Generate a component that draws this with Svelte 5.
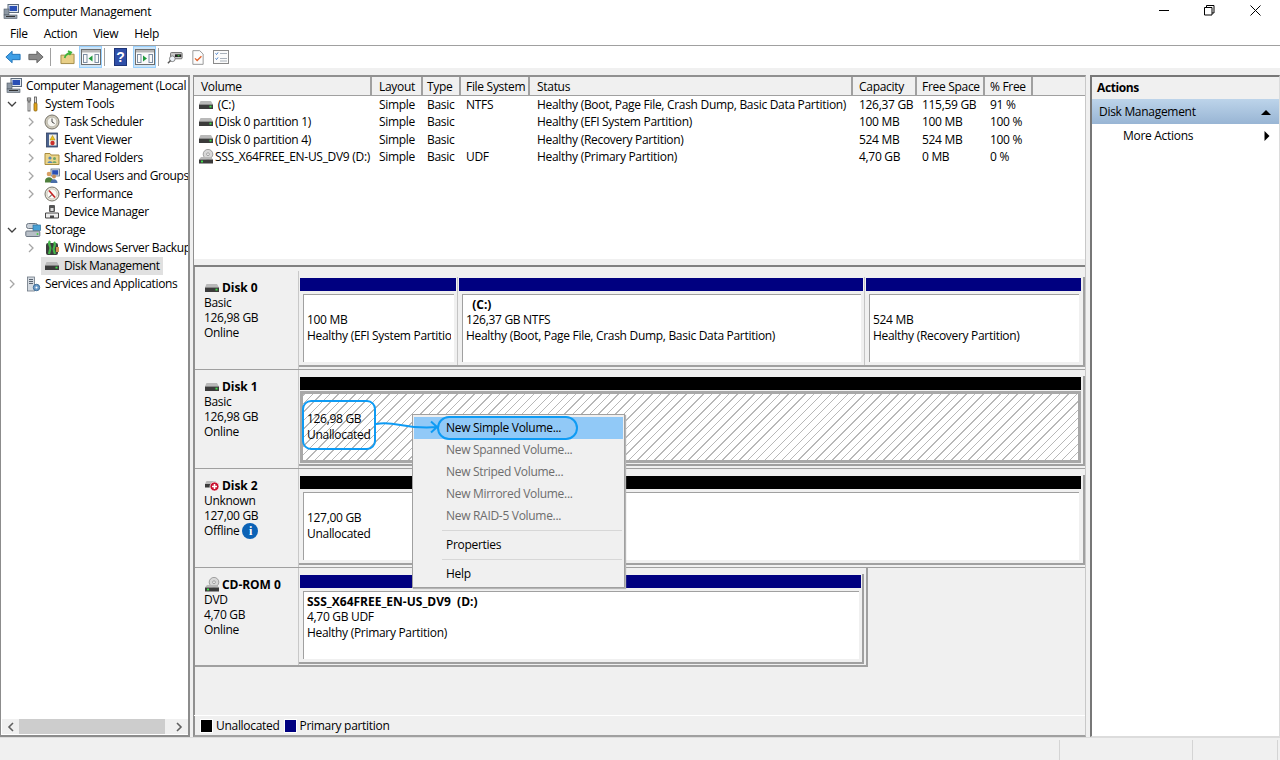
<script lang="ts">
	// Computer Management > Disk Management, with the New Simple Volume menu open.
	const NAVY = '#000080';
	const BLACK = '#000';

	const tree = [
		{ level: 0, label: 'Computer Management (Local', icon: 'computer', chev: '' },
		{ level: 1, label: 'System Tools', icon: 'tools', chev: 'open' },
		{ level: 2, label: 'Task Scheduler', icon: 'clock', chev: 'closed' },
		{ level: 2, label: 'Event Viewer', icon: 'event', chev: 'closed' },
		{ level: 2, label: 'Shared Folders', icon: 'shared', chev: 'closed' },
		{ level: 2, label: 'Local Users and Groups', icon: 'users', chev: 'closed' },
		{ level: 2, label: 'Performance', icon: 'perf', chev: 'closed' },
		{ level: 2, label: 'Device Manager', icon: 'device', chev: 'none' },
		{ level: 1, label: 'Storage', icon: 'storage', chev: 'open' },
		{ level: 2, label: 'Windows Server Backup', icon: 'backup', chev: 'closed' },
		{ level: 2, label: 'Disk Management', icon: 'disk', chev: 'none', selected: true },
		{ level: 1, label: 'Services and Applications', icon: 'services', chev: 'closed' }
	];

	// pad = text inset, the columns don't share one in the original list view
	const columns = [
		{ label: 'Volume', w: 178, pad: 7 },
		{ label: 'Layout', w: 51, pad: 7 },
		{ label: 'Type', w: 38, pad: 4 },
		{ label: 'File System', w: 69, pad: 5 },
		{ label: 'Status', w: 323, pad: 7 },
		{ label: 'Capacity', w: 64, pad: 6 },
		{ label: 'Free Space', w: 68, pad: 5 },
		{ label: '% Free', w: 48, pad: 5 }
	];

	const volumes = [
		{ icon: 'disk', cells: ['\u00a0(C:)', 'Simple', 'Basic', 'NTFS', 'Healthy (Boot, Page File, Crash Dump, Basic Data Partition)', '126,37 GB', '115,59 GB', '91 %'] },
		{ icon: 'disk', cells: ['(Disk 0 partition 1)', 'Simple', 'Basic', '', 'Healthy (EFI System Partition)', '100 MB', '100 MB', '100 %'] },
		{ icon: 'disk', cells: ['(Disk 0 partition 4)', 'Simple', 'Basic', '', 'Healthy (Recovery Partition)', '524 MB', '524 MB', '100 %'] },
		{ icon: 'cd', cells: ['SSS_X64FREE_EN-US_DV9 (D:)', 'Simple', 'Basic', 'UDF', 'Healthy (Primary Partition)', '4,70 GB', '0 MB', '0 %'] }
	];

	const disks = [
		{
			name: 'Disk 0', icon: 'disk', info: ['Basic', '126,98 GB', 'Online'],
			parts: [
				{ w: 159, color: NAVY, title: '', lines: ['100 MB', 'Healthy (EFI System Partition)'] },
				{ w: 407, color: NAVY, title: '\u00a0\u00a0(C:)', lines: ['126,37 GB NTFS', 'Healthy (Boot, Page File, Crash Dump, Basic Data Partition)'] },
				{ w: 218, color: NAVY, title: '', lines: ['524 MB', 'Healthy (Recovery Partition)'] }
			]
		},
		{
			name: 'Disk 1', icon: 'disk', info: ['Basic', '126,98 GB', 'Online'],
			parts: [{ w: 784, color: BLACK, title: '', lines: ['126,98 GB', 'Unallocated'], hatch: true }]
		},
		{
			name: 'Disk 2', icon: 'diskerr', info: ['Unknown', '127,00 GB', 'Offline'], offline: true,
			parts: [{ w: 784, color: BLACK, title: '', lines: ['127,00 GB', 'Unallocated'] }]
		},
		{
			name: 'CD-ROM 0', icon: 'cd', info: ['DVD', '4,70 GB', 'Online'], short: true,
			parts: [{ w: 563, color: NAVY, title: 'SSS_X64FREE_EN-US_DV9\u00a0\u00a0(D:)', lines: ['4,70 GB UDF', 'Healthy (Primary Partition)'] }]
		}
	];

	const menu = [
		{ label: 'New Simple Volume...', active: true },
		{ label: 'New Spanned Volume...', off: true },
		{ label: 'New Striped Volume...', off: true },
		{ label: 'New Mirrored Volume...', off: true },
		{ label: 'New RAID-5 Volume...', off: true },
		{ sep: true },
		{ label: 'Properties' },
		{ sep: true },
		{ label: 'Help' }
	];
</script>

{#snippet icon(name: string)}
	<svg class="ico" viewBox="0 0 16 16" width="16" height="16">
		{#if name === 'computer'}
			<rect x="5" y="0.5" width="10.5" height="8" fill="#dfe6ee" stroke="#5d6b7c" />
			<rect x="6.5" y="2" width="7.5" height="5" fill="#2a4fb5" />
			<rect x="1" y="5" width="5" height="6" fill="#8c97a3" stroke="#4d5763" stroke-width="0.6" />
			<rect x="1" y="11" width="13" height="3.5" fill="#9aa4af" stroke="#4d5763" stroke-width="0.6" />
			<path d="M3 12.5h9" stroke="#333" />
		{:else if name === 'tools'}
			<path d="M4 1v5M2.5 1.5v3.5h3V1.5" fill="none" stroke="#777" stroke-width="1.2" />
			<rect x="3" y="6" width="2" height="9" fill="#eee" stroke="#555" stroke-width="0.8" />
			<rect x="9.5" y="1" width="2" height="6" fill="#ddd" stroke="#555" stroke-width="0.8" />
			<rect x="9" y="7" width="3" height="8" rx="1" fill="#e3a51d" stroke="#8a6510" stroke-width="0.8" />
		{:else if name === 'clock'}
			<circle cx="8" cy="8" r="7" fill="#cfcabb" stroke="#77746a" />
			<circle cx="8" cy="8" r="4.8" fill="#f7f6f1" stroke="#a5a295" stroke-width="0.6" />
			<path d="M8 4.5V8l2.5 1.5" fill="none" stroke="#444" />
		{:else if name === 'event'}
			<rect x="2.5" y="1" width="11" height="14" fill="#4b6390" stroke="#2f3f5f" stroke-width="0.8" />
			<rect x="5" y="2.5" width="7.5" height="11" fill="#f3f1e6" />
			<path d="M8.5 3.5l2.5 4.5H6z" fill="#f0c419" stroke="#96790c" stroke-width="0.5" />
			<circle cx="8.5" cy="11" r="2.2" fill="#c9302c" />
		{:else if name === 'shared'}
			<path d="M1 3.5h5l1 1.5h8v9.5H1z" fill="#ecd58b" stroke="#a98c3d" />
			<circle cx="6" cy="8" r="1.6" fill="#5a89b5" />
			<path d="M3.5 13c0-2.5 5-2.5 5 0z" fill="#5a89b5" />
			<circle cx="10.5" cy="8.5" r="1.5" fill="#74a466" />
			<path d="M8.5 13c0-2.2 4-2.2 4 0z" fill="#74a466" />
		{:else if name === 'users'}
			<rect x="7" y="1" width="8.5" height="7" fill="#dfe6ee" stroke="#5d6b7c" stroke-width="0.8" />
			<rect x="8.2" y="2.2" width="6" height="4.5" fill="#2a4fb5" />
			<circle cx="5" cy="6" r="2.3" fill="#d9a066" />
			<path d="M1 13c0-5 8-5 8 0v1.5H1z" fill="#4e7f3c" />
			<circle cx="10" cy="8.5" r="2" fill="#c98d5a" />
			<path d="M6.5 15c0-5 7-5 7 0z" fill="#4a6ea8" />
		{:else if name === 'perf'}
			<circle cx="8" cy="8" r="7" fill="#e9e6da" stroke="#77746a" />
			<circle cx="8" cy="8" r="5" fill="#fbfaf5" stroke="#aaa69a" stroke-width="0.5" />
			<path d="M5 4.5l6 7" stroke="#cc2222" stroke-width="1.6" />
			<path d="M5 11.5l3-3" stroke="#333" />
		{:else if name === 'device'}
			<rect x="5" y="1" width="6" height="7" rx="1" fill="#555" />
			<rect x="6.5" y="4" width="3" height="3" fill="#ddd" />
			<path d="M1.5 14v-5h13v5z" fill="#eee" stroke="#444" />
			<path d="M6 14v-2.5h4V14z" fill="#444" />
		{:else if name === 'storage'}
			<rect x="1.5" y="1.5" width="11" height="5" rx="2" fill="#c9d0d8" stroke="#6c7682" />
			<rect x="8" y="3" width="7.5" height="5.5" fill="#47a0d5" stroke="#2c6f9a" stroke-width="0.7" />
			<rect x="0.8" y="9" width="14" height="5.5" rx="1" fill="#b8bfc7" stroke="#6c7682" />
			<circle cx="12.5" cy="12" r="1" fill="#4ad04a" />
		{:else if name === 'backup'}
			<rect x="2" y="3" width="12" height="12" rx="2" fill="#3d3d3d" />
			<path d="M6 1c-3 4 2 5 0 9l-1 4M10 2c3 4-2 5 0 9l1 3" fill="none" stroke="#43b649" stroke-width="2.2" />
			<rect x="12" y="7" width="3" height="5" fill="#cf8f55" />
		{:else if name === 'disk'}
			<path d="M2.5 4h10.5l2 3.5H1z" fill="#b9b9b9" />
			<rect x="1" y="7.5" width="14" height="4.5" fill="#3b3b3b" />
			<rect x="11.5" y="8.7" width="2" height="1.8" fill="#3fe04a" />
		{:else if name === 'diskerr'}
			<path d="M2.5 3h9l1.5 3H1z" fill="#b9b9b9" />
			<rect x="1" y="6" width="6" height="3.5" fill="#3b3b3b" />
			<circle cx="10.5" cy="8.5" r="4.5" fill="#c8102e" stroke="#fff" stroke-width="0.7" />
			<path d="M8 8.5h5M10.5 6v5" stroke="#fff" stroke-width="1.6" />
		{:else if name === 'cd'}
			<circle cx="10" cy="5.2" r="4.8" fill="#d8d8d8" stroke="#8d8d8d" stroke-width="0.8" />
			<circle cx="10" cy="5.2" r="1.4" fill="#f4f4f4" stroke="#777" stroke-width="0.6" />
			<path d="M3 8h10l2 2.5H1z" fill="#b9b9b9" />
			<rect x="1" y="10.5" width="14" height="4" fill="#3b3b3b" />
			<rect x="3" y="11.6" width="2" height="1.8" fill="#3fe04a" />
		{:else if name === 'services'}
			<rect x="2.5" y="1" width="7" height="14" fill="#d4dae1" stroke="#6c7682" stroke-width="0.8" />
			<path d="M4 3.5h4M4 5.5h4M4 7.5h4" stroke="#5a6470" />
			<circle cx="11.5" cy="11.5" r="3.2" fill="#6a9bc9" stroke="#3c6a94" />
			<circle cx="11.5" cy="11.5" r="1" fill="#fff" />
		{/if}
	</svg>
{/snippet}

{#snippet paneToggle(color: string, left: boolean)}
	<svg viewBox="0 0 20 18" width="20" height="18">
		<rect x="0.5" y="1.5" width="19" height="15" fill="#fafafa" stroke="#6d6d6d" />
		<rect x="1" y="2" width="18" height="2.5" fill="#b7b7b7" />
		<rect x="2.5" y="6.5" width="3.5" height="8" fill="none" stroke="#7d8ea3" />
		<rect x="14" y="6.5" width="3.5" height="8" fill="none" stroke="#7d8ea3" />
		{#if left}
			<path d="M11.500 7.500v6L7.500 10.500z" fill={color} />
		{:else}
			<path d="M8 7.500v6l4-3z" fill={color} />
		{/if}
	</svg>
{/snippet}

<div class="app">
	<header class="title">
		<span class="tico">{@render icon('computer')}</span>
		<span class="tname">Computer Management</span>
		<div class="winbtns">
			<svg viewBox="0 0 46 22" width="46" height="22"><path d="M18 10.500h10" stroke="#000" /></svg>
			<svg viewBox="0 0 46 22" width="46" height="22"><path d="M17.500 7.500h7.500v7.500h-7.500zM19.500 7.500v-2h7.500v7.500h-2" fill="none" stroke="#000" /></svg>
			<svg viewBox="0 0 46 22" width="46" height="22"><path d="M17.500 5.500l10 10M27.500 5.500l-10 10" stroke="#000" /></svg>
		</div>
	</header>

	<nav class="menubar">
		<span>File</span><span>Action</span><span>View</span><span>Help</span>
	</nav>

	<div class="toolbar">
		<svg class="tool back" viewBox="0 0 18 16" width="16" height="16"><path d="M1 8l7-6.500V5h9v6H8v3.500z" fill="#3f9fe6" stroke="#1b6fb5" /></svg>
		<svg class="tool fwd" viewBox="0 0 18 16" width="16" height="16"><path d="M17 8l-7-6.500V5H1v6h9v3.500z" fill="#8a8a8a" stroke="#5c5c5c" /></svg>
		<i class="tsep"></i>
		<svg class="tool up" viewBox="0 0 16 16" width="15" height="16"><path d="M1 6h5l1-1h8v10H1z" fill="#e8cf87" stroke="#a08a45" /><path d="M5 9c1-4 4-5 6-6M8.500 1.500L12 3l-2 3" fill="none" stroke="#3fb43c" stroke-width="1.8" /></svg>
		<div class="hot">{@render paneToggle('#1f9a3c', true)}</div>
		<i class="tsep"></i>
		<div class="help">?</div>
		<div class="hot">{@render paneToggle('#1f9a3c', false)}</div>
		<i class="tsep last"></i>
		<svg class="tool" viewBox="0 0 18 18" width="16" height="18"><rect x="4" y="4" width="13" height="7" rx="1" fill="#c8c8c8" stroke="#666" /><rect x="9" y="6" width="7" height="3" fill="#222" /><rect x="12" y="7" width="2" height="1.200" fill="#3fe04a" /><circle cx="6" cy="11" r="3.200" fill="#eef4fa" stroke="#777" /><path d="M4 13l-3 3" stroke="#555" stroke-width="1.600" /></svg>
		<svg class="tool" viewBox="0 0 14 18" width="12" height="17"><path d="M1 1h8l4 4v12H1z" fill="#fcfcfc" stroke="#8a8a8a" /><path d="M3.500 10l2.500 2.500 5-5" fill="none" stroke="#e2622b" stroke-width="1.500" /></svg>
		<svg class="tool" viewBox="0 0 16 14" width="16" height="14"><rect x="0.500" y="0.500" width="15" height="13" fill="#fbfbfb" stroke="#8a8a8a" /><path d="M2.500 3.500l1 1 1.500-2M2.500 8.500l1 1 1.500-2" fill="none" stroke="#3c78c8" /><path d="M7 3.500h7M7 8.500h7M7 11h7" stroke="#aab2bb" /></svg>
	</div>

	<main class="panes">
		<aside class="treepane">
			<div class="tree">
				{#each tree as n}
					<div class="node" style="padding-left:{n.level === 2 ? 19 : 0}px">
						<span class="chev" class:root={n.level === 0}>
							{#if n.chev === 'open'}
								<svg viewBox="0 0 10 10" width="10" height="10"><path d="M1 3l4 4 4-4" fill="none" stroke="#404040" stroke-width="1.300" /></svg>
							{:else if n.chev === 'closed'}
								<svg viewBox="0 0 10 10" width="10" height="10"><path d="M3 1l4 4-4 4" fill="none" stroke="#a6a6a6" stroke-width="1.300" /></svg>
							{/if}
						</span>
						<span class="lbl" class:sel={n.selected}>{@render icon(n.icon)}<span class="ltext">{n.label}</span></span>
					</div>
				{/each}
			</div>
			<div class="hscroll">
				<svg viewBox="0 0 8 10" width="8" height="10"><path d="M6 1L2 5l4 4" fill="none" stroke="#606060" stroke-width="1.600" /></svg>
				<i class="thumb"></i>
				<svg class="rarrow" viewBox="0 0 8 10" width="8" height="10"><path d="M2 1l4 4-4 4" fill="none" stroke="#606060" stroke-width="1.600" /></svg>
			</div>
		</aside>

		<section class="center">
			<div class="list">
				<div class="lhead">
					{#each columns as c}
						<div class="hcell" style="width:{c.w}px;padding-left:{c.pad}px">{c.label}</div>
					{/each}
				</div>
				{#each volumes as v}
					<div class="lrow">
						{#each v.cells as cell, i}
							<div class="lcell" class:first={i === 0} style="width:{columns[i].w}px;padding-left:{i === 0 ? 4 : columns[i].pad}px">
								{#if i === 0}{@render icon(v.icon)}{/if}<span>{cell}</span>
							</div>
						{/each}
					</div>
				{/each}
			</div>

			<div class="disks">
				{#each disks as d}
					<div class="drow" class:short={d.short}>
						<div class="dlabel">
							<div class="dname">{@render icon(d.icon)}<b>{d.name}</b></div>
							{#each d.info as line, i}
								<div class="dline">
									{line}
									{#if d.offline && i === 2}
										<span class="info">i</span>
									{/if}
								</div>
							{/each}
						</div>
						<div class="dframe">
							{#each d.parts as p}
								<div class="part" style="width:{p.w}px">
									<div class="pbar" style="background:{p.color}"></div>
									<div class="pbox" class:hatch={p.hatch}>
										<div class="ptitle">{p.title || '\u00a0'}</div>
										{#each p.lines as l}<div class="pline">{l}</div>{/each}
									</div>
								</div>
							{/each}
						</div>
					</div>
				{/each}
			</div>

			<div class="legend">
				<i class="swatch" style="background:{BLACK}"></i><span>Unallocated</span>
				<i class="swatch" style="background:{NAVY}"></i><span>Primary partition</span>
			</div>
		</section>

		<aside class="actions">
			<div class="ahead">Actions</div>
			<div class="aband">
				<span>Disk Management</span>
				<svg viewBox="0 0 10 6" width="10" height="6"><path d="M0 6l5-5 5 5z" fill="#000" /></svg>
			</div>
			<div class="aitem">
				<span>More Actions</span>
				<svg viewBox="0 0 6 10" width="6" height="10"><path d="M0.500 0l5 5-5 5z" fill="#000" /></svg>
			</div>
		</aside>
	</main>

	<footer class="status">
		<i></i><i></i><i></i>
	</footer>

	<div class="ctx">
		{#each menu as m}
			{#if m.sep}
				<div class="msep"></div>
			{:else}
				<div class="mitem" class:active={m.active} class:off={m.off}>{m.label}</div>
			{/if}
		{/each}
	</div>

	<!-- annotation drawn over the screenshot -->
	<div class="callout"></div>
	<div class="pill"></div>
	<svg class="arrow" viewBox="0 0 66 16" width="66" height="16">
		<path d="M1 6C20 2 30 12 62 9M56 3.500l6 5.500-6 5.500" fill="none" stroke="#0e9bf4" stroke-width="2" />
	</svg>
</div>

<style>
	:global(body) { margin: 0; background: #f0f0f0; }
	.app {
		position: relative;
		width: 1280px;
		height: 760px;
		overflow: hidden;
		display: flex;
		flex-direction: column;
		background: #f0f0f0;
		color: #000;
		font: 12px/15.3px "Open Sans", "Noto Sans", sans-serif;
		letter-spacing: -0.3px;
	}
	.ico { flex: 0 0 auto; display: block; }

	.title { height: 23px; flex: 0 0 auto; display: flex; align-items: center; background: #fff; padding-left: 3px; }
	.tico { width: 20px; }
	.tname { flex: 1; }
	.winbtns { display: flex; margin-right: 1px; align-self: flex-start; }
	.menubar { height: 22px; flex: 0 0 auto; display: flex; align-items: center; gap: 16px; padding-left: 10px; background: #fff; border-bottom: 1px solid #a0a0a0; }
	.toolbar { height: 22px; flex: 0 0 auto; display: flex; align-items: center; padding-left: 5px; background: #fff; }
	.tool { flex: 0 0 auto; margin-right: 9px; }
	.tool.back { margin-right: 7px; }
	.tool.fwd { margin-right: 6px; }
	.tool.up { margin-right: 4px; }
	.tsep { width: 1px; height: 18px; background: #a0a0a0; margin-right: 9px; }
	.tsep.last { margin-right: 8px; }
	.hot { width: 23px; height: 22px; display: grid; place-items: center; box-sizing: border-box; background: #cce4f7; border: 1px solid #99d1ff; margin-right: 2px; }
	.help { width: 13px; height: 18px; margin-right: 6px; display: grid; place-items: center; background: #2f4fa8; color: #fff; font: bold 14px "Liberation Sans", sans-serif; letter-spacing: 0; box-shadow: inset 0 0 0 1px #1d3478; }

	.panes { height: 662px; flex: 0 0 auto; margin-top: 7px; display: flex; }

	.treepane { width: 190px; box-sizing: border-box; display: flex; flex-direction: column; background: #fff; border: 1px solid #8c8c8c; border-width: 2px 2px 2px 1px; }
	.tree { flex: 1; overflow: hidden; }
	.node { height: 18px; display: flex; align-items: center; white-space: nowrap; }
	.chev { width: 24px; flex: 0 0 auto; }
	.chev.root { width: 5px; }
	.chev svg { display: block; margin-left: 6px; }
	.lbl { display: flex; align-items: center; height: 18px; margin-left: -3px; padding: 0 2px 0 3px; }
	.lbl.sel { background: #e0e0e0; }
	.ltext { margin-left: 4px; margin-right: 1px; letter-spacing: -0.36px; }
	.hscroll { height: 15px; margin: 0 0 1px 1px; display: flex; align-items: center; padding: 0 5px; background: #f0f0f0; }
	.thumb { width: 146px; height: 15px; margin-left: 4px; background: #cdcdcd; }
	.rarrow { margin-left: auto; }

	.center { width: 893px; margin-left: 3px; box-sizing: border-box; display: flex; flex-direction: column; border: 2px solid #909090; border-right: 1px solid #c8c8c8; border-bottom-color: #a0a0a0; }
	.list { height: 190px; flex: 0 0 auto; box-sizing: border-box; margin-left: -1px; background: #fff; border-bottom: 2px solid #808080; box-shadow: inset 0 -6px #f0f0f0; }
	.lhead { height: 19px; display: flex; background: #f0f0f0; }
	.hcell { height: 19px; box-sizing: border-box; padding-top: 2px; border-right: 2px solid #a0a0a0; border-bottom: 1px solid #a0a0a0; white-space: nowrap; overflow: hidden; }
	.lhead::after { content: ''; flex: 1; border-bottom: 1px solid #a0a0a0; }
	.lrow { height: 17.33px; display: flex; align-items: center; }
	.lcell { flex: 0 0 auto; box-sizing: border-box; white-space: nowrap; overflow: hidden; }
	.lcell.first { display: flex; align-items: center; gap: 1px; }

	.disks { flex: 1; padding-top: 4px; }
	.drow { height: 99px; box-sizing: border-box; display: flex; border-bottom: 1px solid #a0a0a0; }
	.drow.short { width: 673px; border-right: 2px solid #a0a0a0; border-bottom-width: 2px; }
	.dlabel { width: 104px; flex: 0 0 auto; box-sizing: border-box; border-right: 1px solid #c8c8c8; padding: 8px 0 0 9px; }
	.dname { display: flex; align-items: center; height: 18px; margin-bottom: -2px; gap: 2px; letter-spacing: -0.05px; }
	.dname b { font-weight: 700; }
	.dline { height: 15px; display: flex; align-items: center; gap: 3px; white-space: nowrap; }
	.info { width: 16px; height: 16px; margin-top: 1px; border-radius: 50%; display: grid; place-items: center; background: #0b62b6; color: #fff; font: bold 12px "Liberation Serif", serif; }
	.dframe { height: 90px; margin-top: 6px; box-sizing: border-box; display: flex; border: 0 solid #a0a0a0; border-width: 0 2px 2px 0; width: max-content; }
	.part { box-sizing: border-box; height: 88px; flex: 0 0 auto; padding: 1px 1px 0 1px; border-right: 1px solid #c4c4c4; }
	.part:last-child { border-right: 0; padding-right: 2px; }
	.short .part:last-child { padding-right: 1px; }
	.pbar { height: 13px; }
	.pbox { height: 68px; margin: 3px 2px 0 3px; box-sizing: border-box; padding: 1.5px 3px 0 3px; background: #fff; border: 0 solid #a0a0a0; border-width: 1px 0 0 1px; white-space: nowrap; }
	.pbox.hatch {
		height: 72px;
		margin: 1px 0 0;
		padding: 1.5px 0 0 4px;
		border: 3px solid #a8a8a8;
		background: repeating-linear-gradient(-45deg, #fff 0 5px, #b8b8b8 5px 6px);
	}
	.ptitle { font-weight: 700; height: 15.5px; letter-spacing: 0; }
	.pline { height: 15.5px; overflow: hidden; }

	.legend { height: 20px; flex: 0 0 auto; box-sizing: border-box; margin-left: -1px; display: flex; align-items: center; padding-left: 7px; border-top: 1px solid #fff; white-space: nowrap; }
	.swatch { width: 11px; height: 12px; margin: 0 3px 0 -1px; border: 1px solid #fff; box-sizing: content-box; }
	.legend span { margin-right: 5px; }

	.actions { width: 190px; margin-left: 4px; box-sizing: border-box; background: #fff; border-left: 2px solid #777; border-top: 2px solid #777; border-bottom: 1px solid #dcdcdc; border-right: 1px solid #dcdcdc; }
	.ahead { height: 22px; display: flex; align-items: center; padding-left: 5px; background: #f0f0f0; font-weight: 700; letter-spacing: -0.4px; }
	.aband { height: 25px; display: flex; align-items: center; justify-content: space-between; padding: 0 8px 0 7px; background: linear-gradient(#bdd4ea, #98b5d4); }
	.aitem { height: 24px; display: flex; align-items: center; justify-content: space-between; padding: 0 9px 0 31px; }

	.status { flex: 1; position: relative; border-top: 1px solid #dcdcdc; }
	.status i { position: absolute; top: 2px; bottom: 0; width: 1px; background: #d4d4d4; }
	.status i:nth-child(1) { left: 1059px; }
	.status i:nth-child(2) { left: 1192px; }
	.status i:nth-child(3) { left: 1277px; }

	.ctx { position: absolute; left: 412px; top: 414px; width: 213px; height: 174px; box-sizing: border-box; padding: 2px 1px; background: #f0f0f0; border: 1px solid #a0a0a0; box-shadow: 1px 1px 1px #b5b5b5; }
	.mitem { height: 22px; line-height: 22px; padding-left: 32px; }
	.mitem.active { background: #91c9f7; }
	.mitem.off { color: #6d6d6d; }
	.msep { height: 1px; margin: 3px 1px 3px 28px; background: #d7d7d7; }

	.callout { position: absolute; left: 302px; top: 400px; width: 74px; height: 50px; box-sizing: border-box; border: 2px solid #0e9bf4; border-radius: 9px; }
	.pill { position: absolute; left: 437px; top: 416px; width: 141px; height: 24px; box-sizing: border-box; border: 2px solid #0e9bf4; border-radius: 12px; }
	.arrow { position: absolute; left: 375px; top: 418px; }
</style>
